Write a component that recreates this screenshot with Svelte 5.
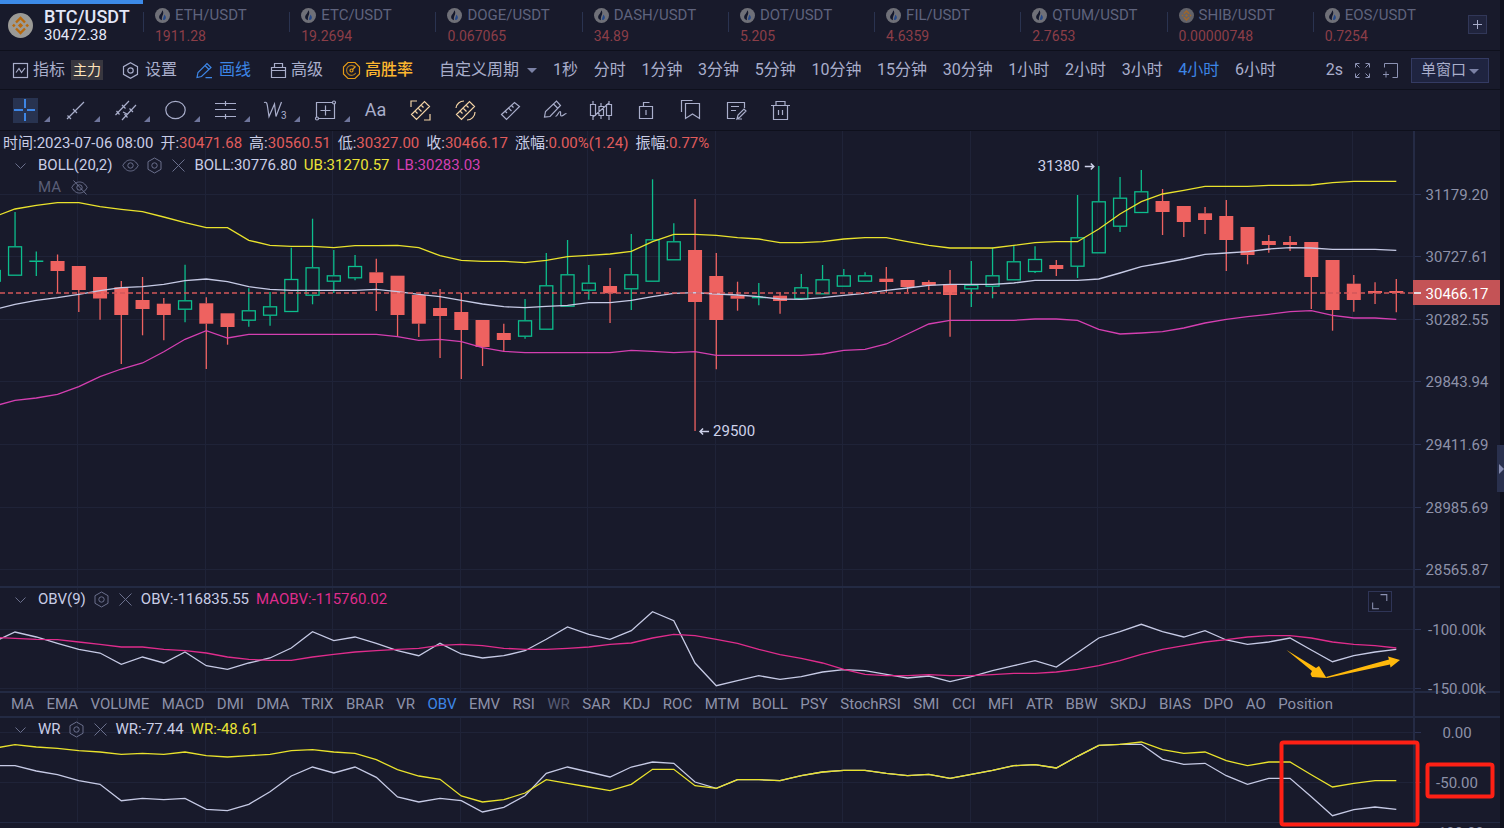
<script>
  const tickers = [
    { name: 'ETH/USDT', price: '1911.28', logo: 'flame' },
    { name: 'ETC/USDT', price: '19.2694', logo: 'flame' },
    { name: 'DOGE/USDT', price: '0.067065', logo: 'flame' },
    { name: 'DASH/USDT', price: '34.89', logo: 'flame' },
    { name: 'DOT/USDT', price: '5.205', logo: 'flame' },
    { name: 'FIL/USDT', price: '4.6359', logo: 'flame' },
    { name: 'QTUM/USDT', price: '2.7653', logo: 'flame' },
    { name: 'SHIB/USDT', price: '0.00000748', logo: 'bnb' },
    { name: 'EOS/USDT', price: '0.7254', logo: 'flame' },
  ];

  const periods = ['1秒', '分时', '1分钟', '3分钟', '5分钟', '10分钟', '15分钟', '30分钟', '1小时', '2小时', '3小时', '4小时', '6小时'];
  let period = '4小时';

  const indicators = ['MA', 'EMA', 'VOLUME', 'MACD', 'DMI', 'DMA', 'TRIX', 'BRAR', 'VR', 'OBV', 'EMV', 'RSI', 'WR', 'SAR', 'KDJ', 'ROC', 'MTM', 'BOLL', 'PSY', 'StochRSI', 'SMI', 'CCI', 'MFI', 'ATR', 'BBW', 'SKDJ', 'BIAS', 'DPO', 'AO', 'Position'];
  let indicator = 'OBV';

  const quote = [
    ['开', '30471.68'],
    ['高', '30560.51'],
    ['低', '30327.00'],
    ['收', '30466.17'],
    ['涨幅', '0.00%(1.24)'],
    ['振幅', '0.77%'],
  ];

  // all panes share one vertical chart space, it starts under the toolbars
  const TOP = 131;
  const AXIS = 86;
  const STEP = 21.25;
  const LAST = 65;
  let width = 1500;

  $: plot = width - AXIS;
  $: x = (i) => plot - 17.7 - (LAST - i) * STEP;
  $: line = (ys) => ys.map((y, k) => `${x(k - 1).toFixed(1)},${y}`).join(' ');

  // [up, body top, body bottom, high, low]
  const candles = [
    [1, 270, 281.7, 270, 281.7], [1, 246.3, 275.7, 212, 275.7], [1, 260.5, 262, 251.5, 276], [0, 261, 271, 254.5, 293],
    [0, 266, 290, 266, 312], [0, 277, 298.5, 277, 319.7], [0, 287.3, 315, 281, 364], [0, 300, 309, 277, 335.3],
    [0, 303.7, 315, 298, 340.3], [1, 300.3, 309.7, 264.7, 322.3], [0, 303.3, 323.7, 297.3, 369], [0, 313.3, 327, 313.3, 344.7],
    [1, 310.3, 320.7, 288.3, 326.7], [1, 306.3, 315.7, 292, 325.7], [1, 279, 312, 247.7, 312], [1, 267.3, 295.7, 218.7, 304.3],
    [1, 275.3, 281.7, 250, 293], [1, 266, 278.3, 255, 280.3], [0, 272.3, 283, 258.7, 311], [0, 275.7, 315, 275.7, 336.3],
    [0, 295, 323.7, 295, 337], [0, 308, 316, 289, 358], [0, 312, 330, 293, 379], [0, 320, 347, 320, 366],
    [0, 333, 340, 323.7, 351.3], [1, 320.3, 336.7, 299, 338.7], [1, 285.3, 329.7, 253, 329.7], [1, 274.3, 306.7, 240, 306.7],
    [1, 282.7, 290.7, 265, 299.7], [0, 286, 293.3, 268, 323], [1, 274.3, 289.3, 234, 310], [1, 239.3, 281.7, 179.3, 281.7],
    [1, 241.3, 260.3, 223.3, 260.3], [0, 250, 302, 199, 431], [0, 276, 320, 253, 369.3], [0, 295.7, 298.7, 281.7, 310.7],
    [1, 296.7, 298.3, 283, 305.3], [0, 295.7, 301, 292.3, 313.7], [1, 287.3, 299, 274, 299], [1, 279.3, 294.3, 265, 294.3],
    [1, 275.3, 286.7, 269, 286.7], [1, 275.3, 281.7, 272.3, 281.7], [0, 278.7, 282, 267, 292.7], [0, 280, 287, 280, 292],
    [0, 282, 285.3, 280.3, 290], [0, 284, 295, 270, 336.7], [1, 284.7, 289.3, 261, 307], [1, 275.3, 286.7, 247.7, 298.3],
    [1, 261.3, 280.3, 245.3, 280.3], [1, 259, 272, 246.3, 273], [0, 265, 269, 260, 276], [1, 237.3, 266.7, 195, 278],
    [1, 201.3, 253.3, 166, 253.3], [1, 197.7, 226.7, 177, 232], [1, 191.3, 213, 170, 213], [0, 201, 212, 189, 235],
    [0, 206, 222, 206, 237], [0, 213.3, 220, 207, 234], [0, 216, 240, 200, 271], [0, 227, 255, 227, 264.3],
    [0, 241, 245, 235, 252.7], [0, 242, 245, 236, 251], [0, 242, 277, 242, 309], [0, 260, 310, 260, 330.7],
    [0, 283.7, 300, 275, 311.7], [0, 291, 293, 282.3, 304], [0, 291, 293, 279, 312.3],
  ];

  const upper = [217, 209, 205.3, 202.7, 202.7, 206.7, 209.3, 211.7, 217, 222.7, 227.7, 227.7, 240.3, 245.3, 246.3, 246.3, 247.7, 245.7, 245.7, 245.3, 247.7, 255.7, 260.3, 261.3, 261.3, 262.7, 260.3, 256.7, 255.3, 254, 251.3, 241.7, 234.3, 234.3, 235.3, 237.7, 239, 242.7, 242.7, 241.7, 239, 237.7, 237.7, 241.7, 245.3, 248, 248, 248, 245.3, 242.7, 241.7, 241.7, 229, 214, 201.7, 194, 190.3, 186.3, 186.3, 186.3, 185.3, 185.3, 185, 182.7, 181.3, 181.3, 181.3];
  const middle = [309.7, 304.3, 300.3, 297.7, 294.3, 290.7, 287.7, 286.7, 284.3, 280.7, 279, 281.7, 286.7, 289.3, 290.3, 290.3, 290.3, 290.3, 289.3, 291.7, 294.3, 296.7, 300.3, 304, 306.7, 307.7, 306.3, 305.3, 302.7, 302.7, 300.3, 296.7, 293.3, 292.7, 294, 295, 296.7, 299, 299.3, 297.7, 295.3, 293.3, 290.3, 288, 285.3, 284.3, 284.3, 284.3, 283, 280.3, 280.3, 280.3, 279, 273, 266.7, 263, 259, 254.3, 253, 251.7, 249, 247.7, 248, 249.3, 249.3, 249.3, 250.3];
  const lower = [406.3, 400.3, 398, 394.3, 386.7, 376.7, 369, 363, 351.7, 339.3, 330.7, 338, 334.3, 334.3, 334.3, 334.3, 334.3, 334.3, 334.3, 336.7, 340.3, 339.3, 341.7, 347.7, 351.3, 352.7, 352.7, 352.7, 352.7, 352.7, 350.3, 351.3, 352.7, 351.7, 355.3, 355.3, 355.3, 355.3, 355.3, 354, 350.3, 349.3, 344, 334, 324, 320.3, 320.3, 320.3, 320.3, 319, 319, 320.3, 329.3, 334, 333, 331.7, 328, 323, 319.3, 316.7, 314.3, 311.7, 310.7, 315.3, 318, 318, 319.3];
  const obv = [642, 632, 637, 643.3, 649.3, 653, 664.3, 657, 663, 652, 665.7, 669.3, 663, 658, 648, 631.7, 640.7, 637, 643.3, 650.7, 655.7, 643.3, 654, 658, 655.7, 650.7, 639.3, 627, 634.3, 639.3, 630.7, 611.7, 620.7, 663, 685.7, 680.7, 675.7, 679.3, 676.7, 672, 669.7, 670.7, 674.3, 678, 676, 681.7, 676.7, 670.7, 665.7, 660.7, 667, 652.7, 638, 631.7, 624.3, 631.7, 637, 630.7, 640, 644.3, 642, 638, 650, 661.7, 655.7, 652, 649.3];
  const maobv = [637.3, 638.3, 639.3, 639.7, 642, 644.3, 647, 647, 649.3, 650.7, 653, 657, 659.3, 660.3, 660.3, 657, 654.3, 652, 650.7, 649.3, 648.3, 645.3, 644.3, 645.7, 648.3, 649.3, 649.3, 648.3, 647, 644.3, 643, 638, 634.3, 635.7, 639.3, 643.3, 649.3, 654.7, 658.3, 663, 669.3, 674.3, 675.7, 675.7, 674.7, 675.7, 675.7, 674.7, 673.3, 673.3, 672, 669.3, 665.7, 660.7, 654.3, 649.3, 645.7, 642, 639.7, 637, 635.7, 635.7, 638, 642, 644.3, 645.7, 648];
  const wrSlow = [748.3, 744.7, 747, 748.3, 750.7, 752, 754.3, 753.3, 754.3, 752, 755.7, 757, 755.7, 754.3, 750.7, 749.7, 752, 753.3, 759.7, 769.7, 776, 779.3, 796, 802, 799.7, 793, 779.7, 783.3, 787, 790.7, 784.3, 769.3, 769.3, 785.7, 788.3, 779.7, 779.7, 780.7, 775.7, 772, 770.3, 770.3, 773.3, 775.7, 774.3, 778.3, 774.3, 770.3, 765.7, 764.7, 768, 756.3, 745.3, 744.3, 742, 749.7, 753.3, 752, 760.7, 765.7, 762, 762, 774.7, 787, 783.3, 780.7, 780.7];
  const wrFast = [765.7, 765.7, 771, 774.7, 780.7, 784.3, 800.7, 798.3, 799.7, 798.3, 809.3, 810.7, 804.3, 791.7, 776, 767, 773, 767, 777.3, 797, 802, 798.3, 800.7, 812, 807.3, 795.7, 773.3, 767, 772, 777, 767, 762, 763.3, 782, 788.3, 779.7, 779.7, 780.7, 775.7, 772, 770.3, 770.3, 773.3, 775.7, 774.3, 778.3, 774.3, 770.3, 765.7, 764.7, 768, 756.3, 745.3, 744.3, 744.3, 759.3, 764.3, 763.3, 775.7, 784.3, 778.3, 778.3, 796.7, 815.7, 809.7, 807, 809.3];

  const columns = [3, 9, 15, 21, 27, 33, 39, 45, 51, 57, 63];
  const priceAxis = [
    ['31179.20', 194], ['30727.61', 256], ['30282.55', 319], ['29843.94', 381],
    ['29411.69', 444], ['28985.69', 507], ['28565.87', 569],
  ];
  const obvAxis = [['-100.00k', 629], ['-150.00k', 688]];
  const wrAxis = [['0.00', 732], ['-50.00', 782]];
</script>

{#snippet flame()}
  <svg class="coin" viewBox="0 0 15 15" aria-hidden="true">
    <circle cx="7.5" cy="7.5" r="7.5" fill="#6f7078" />
    <path d="M7.400 2.200c1 1.500 1.100 2.900.5 4.500-.6 1.500-1.300 2.700-1 5.500C4.800 11.500 3.800 10 4.200 8.200 4.600 6.400 7 5 7.400 2.200z" fill="#14182c" />
    <path d="M9.400 6.600c1.500 1.600 1.800 3 1.200 4.200-.5.900-1.300 1.300-2.400 1.300-.6-2.200.9-3.300 1.200-5.500z" fill="#24488a" />
  </svg>
{/snippet}

{#snippet bnb(bg, fg)}
  <svg class="coin" viewBox="0 0 25 25" aria-hidden="true">
    <circle cx="12.5" cy="12.5" r="12.5" fill={bg} />
    <g fill="none" stroke={fg} stroke-width="2.400">
      <path d="M8 9.500l4.500-4.500L17 9.500M8 15.500l4.500 4.500 4.500-4.500" />
    </g>
    <path d="M12.500 9.900l2.600 2.600-2.600 2.600-2.600-2.600zM5.800 10.700l1.800 1.800-1.800 1.800L4 12.500zM19.200 10.700l1.800 1.800-1.800 1.800-1.800-1.800z" fill={fg} />
  </svg>
{/snippet}

{#snippet chevron()}
  <button class="mini chevron" aria-label="收起">
    <svg viewBox="0 0 17 17"><path d="M3.500 6.500l5 5 5-5" /></svg>
  </button>
{/snippet}

{#snippet hexagon()}
  <button class="mini" aria-label="参数">
    <svg viewBox="0 0 17 17"><path d="M8.500 1l6.500 3.700v7.600L8.500 16 2 12.300V4.700z" /><circle cx="8.500" cy="8.500" r="2.700" /></svg>
  </button>
{/snippet}

{#snippet cross()}
  <button class="mini" aria-label="关闭">
    <svg viewBox="0 0 17 17"><path d="M2.500 2.500l12 12M14.500 2.500l-12 12" /></svg>
  </button>
{/snippet}

{#snippet grid(rows, top, bottom)}
  {#each columns as c}
    <line class="grid" x1={Math.round(x(c) - 1.5) + 0.5} x2={Math.round(x(c) - 1.5) + 0.5} y1={top} y2={bottom} />
  {/each}
  {#each rows as [label, y]}
    <line class="grid" x1="0" x2={plot} y1={y + 0.5} y2={y + 0.5} />
    <line class="tick" x1={plot} x2={plot + 7} y1={y + 0.5} y2={y + 0.5} />
    <text class="label" x={plot + 43} y={y + 6}>{label}</text>
  {/each}
  <line class="axis" x1={plot} x2={plot} y1={top} y2={bottom} />
{/snippet}

<div class="app">
  <header class="tickers">
    <a class="active" href="#btc">
      {@render bnb('#9b9a96', '#b8690c')}
      <span class="active-text">
        <strong>BTC/USDT</strong>
        <span>30472.38</span>
      </span>
    </a>
    {#each tickers as t}
      <a class="ticker" href="#{t.name}">
        <span class="name">
          {#if t.logo === 'bnb'}{@render bnb('#63636a', '#a0672a')}{:else}{@render flame()}{/if}
          {t.name}
        </span>
        <span class="price">{t.price}</span>
      </a>
    {/each}
    <div class="add">
      <button aria-label="添加">
        <svg viewBox="0 0 17 17"><path d="M8.500 4v9M4 8.500h9" /></svg>
      </button>
    </div>
  </header>

  <nav class="menu">
    <button class="item">
      <svg viewBox="0 0 17 17"><rect x="1.500" y="1.500" width="14" height="14" /><path d="M4 10.500l3-4 2.500 4 3.500-4.500" /></svg>
      指标<span class="badge">主力</span>
    </button>
    <button class="item wide">
      <svg viewBox="0 0 17 17"><path d="M8.500.8l7 3.900v7.600l-7 3.900-7-3.900V4.700z" /><circle cx="8.500" cy="8.500" r="2.700" /></svg>
      设置
    </button>
    <button class="item wide draw">
      <svg viewBox="0 0 17 17"><path d="M1 15.500l1-5L11 1.500l4 4-9.500 9zM9 3.500l4 4M9.500 15.700H16" /></svg>
      画线
    </button>
    <button class="item">
      <svg viewBox="0 0 17 17"><path d="M1.500 5.500h14v10h-14zM4.500 5.500v-4h8v4M1.500 8.500h14" /></svg>
      高级
    </button>
    <button class="item rate">
      <svg viewBox="0 0 19 19"><path d="M6 1.500h7L17.500 6v7L13 17.500H6L1.500 13V6z" /><path d="M13.300 6a5 5 0 1 0 .5 6" opacity=".7" /><circle cx="9.500" cy="9.500" r="1.500" /><path d="M10.500 8.500l3-3" /></svg>
      高胜率
    </button>
    <button class="custom">自定义周期<i class="caret"></i></button>
    <ul class="periods">
      {#each periods as p}
        <li><button class:on={p === period} on:click={() => (period = p)}>{p}</button></li>
      {/each}
    </ul>
    <div class="right">
      <span>2s</span>
      <button aria-label="全屏">
        <svg viewBox="0 0 17 17"><path d="M1.500 5.500v-4h4M11.500 1.500h4v4M15.500 11.500v4h-4M5.500 15.500h-4v-4M2 2l3.500 3.500M15 2l-3.500 3.500M15 15l-3.500-3.500M2 15l3.500-3.500" /></svg>
      </button>
      <button aria-label="新窗口">
        <svg viewBox="0 0 17 17"><path d="M2.500 5.500v-4h13v14h-5M1 12.500h6M4 9.500v6" /></svg>
      </button>
      <span class="select">
        <select aria-label="窗口布局"><option>单窗口</option><option>双窗口</option></select>
        <i class="caret"></i>
      </span>
    </div>
  </nav>

  <div class="tools">
    <button class="tool more on" aria-label="十字光标">
      <svg viewBox="0 0 25 25"><path d="M12 1v9M12 15v8M1 12h9M14 12h8" /></svg>
    </button>
    <button class="tool more" aria-label="趋势线">
      <svg viewBox="0 0 25 25"><path d="M4 21L21 4M4.500 17.500l3.500 3.500M10 11l4 4" /></svg>
    </button>
    <button class="tool more" aria-label="平行线">
      <svg viewBox="0 0 25 25"><path d="M2.500 17L16 3M9 22L23 7M3.500 13l3 3.500M9 7l3.500 3.500M11.500 16l3 3.500M16.500 10.500l3.500 3.500M10 14l4 2" /></svg>
    </button>
    <button class="tool more" aria-label="椭圆">
      <svg viewBox="0 0 25 25"><ellipse cx="12.500" cy="12" rx="9.700" ry="8.700" /></svg>
    </button>
    <button class="tool more" aria-label="水平线">
      <svg viewBox="0 0 25 25"><path d="M2 5.500h21M2 11.500h21M2 18.500h21M12.500 3v5M12.500 16v5" /></svg>
    </button>
    <button class="tool more" aria-label="波浪">
      <svg viewBox="0 0 25 25"><path d="M1 4.500c3-1 3 1 3.500 4l1.500 10L11.500 6l1.500 12.500L18.500 4" /><text x="18" y="21" class="sub">3</text></svg>
    </button>
    <button class="tool more" aria-label="区间">
      <svg viewBox="0 0 25 25"><path d="M19.500 4.500h-16v15M5.500 20.500h16v-15M12.500 7.500v10M7.500 12.500h10" /><circle cx="21" cy="4.500" r="1.500" /><circle cx="4" cy="20.500" r="1.500" /></svg>
    </button>
    <button class="tool text">Aa</button>
    <button class="tool gold" aria-label="测量">
      <svg viewBox="0 0 25 25"><path d="M3.500 16.500L16.500 3.500l5 5-13 13zM7 13l2.500 2.500M10 10l3.500 3.500M13 7l2.500 2.500M3 9V3h6M22 16v6h-6" /></svg>
    </button>
    <button class="tool gold" aria-label="区域测量">
      <svg viewBox="0 0 25 25"><path d="M3.500 16.500L16.500 3.500l5 5-13 13zM7 13l2.500 2.500M10 10l3.500 3.500M13 7l2.500 2.500M3 10a8 8 0 0 1 8-7M22 14a8 8 0 0 1-8 8" /></svg>
    </button>
    <button class="tool" aria-label="标尺">
      <svg viewBox="0 0 25 25"><path d="M3.500 16.500L16.500 4.500l5 4-13 13zM7 13l2 2M10.500 10l3 3M13.500 7.500l2 2" /></svg>
    </button>
    <button class="tool" aria-label="画笔">
      <svg viewBox="0 0 25 25"><path d="M1.500 19l1-5.500L13.500 3l4 4.500L7 18.500zM10.500 6l4 4M12.500 18.500c2 0 3-5 4.500-5s-.5 4.500 1.500 4.500 3-2.500 5-2.500" /></svg>
    </button>
    <button class="tool" aria-label="K线">
      <svg viewBox="0 0 25 25"><path d="M2.500 6.500h5v11h-5zM11 8.500h4.500v9H11zM18.500 6.500h5v11h-5zM5 3v3.500M5 17.500V22M13 5v3.500M13 17.500V21M21 3v3.500M21 17.500V22M5 19L21 5" /></svg>
    </button>
    <button class="tool" aria-label="锁定">
      <svg viewBox="0 0 25 25"><path d="M6.500 8.500h13v12h-13zM10.500 8.500v-4h6M13 12v5" /></svg>
    </button>
    <button class="tool" aria-label="书签">
      <svg viewBox="0 0 25 25"><path d="M7.500 5.500h14v15l-7-4.500-7 4.500zM3.500 14V2.500h11" /></svg>
    </button>
    <button class="tool" aria-label="笔记">
      <svg viewBox="0 0 25 25"><path d="M12 20.500H4.500v-16h17V10M8 8.500h8M8 12.500h5M14 21l1-4 6-6 2 2-6 6zM14 21h5" /></svg>
    </button>
    <button class="tool" aria-label="删除">
      <svg viewBox="0 0 25 25"><path d="M3 7.500h19M8 7.500v-4h9v4M5.500 7.500v14h14v-14M10.500 12v5M14.500 12v5" /></svg>
    </button>
  </div>

  <main bind:clientWidth={width}>
    <section class="pane">
      <svg class="plot" height="455" viewBox="0 {TOP} {width} 455">
        {@render grid(priceAxis, TOP, 586)}
        {#each candles as [up, top, bottom, high, low], k}
          {@const cx = x(k - 1)}
          <g class={up ? 'up' : 'down'}>
            <line x1={cx} x2={cx} y1={high} y2={top} />
            <line x1={cx} x2={cx} y1={bottom} y2={low} />
            {#if up && bottom - top > 2}
              <rect x={cx - 6.5} y={top + 0.5} width="13" height={bottom - top - 1} />
            {:else}
              <rect class="solid" x={cx - 7} y={top} width="14" height={bottom - top} />
            {/if}
          </g>
        {/each}
        <polyline class="yellow" points={line(upper)} />
        <polyline class="white" points={line(middle)} />
        <polyline class="pink" points={line(lower)} />
        <line class="last" x1="0" x2={plot} y1="293" y2="293" />
        <rect class="flag" x={plot - 1} y="280" width={AXIS + 1} height="25" />
        <line class="flag-tick" x1={plot} x2={plot + 7} y1="293" y2="293" />
        <text class="label now" x={plot + 43} y="299">30466.17</text>
        <text class="mark" text-anchor="end" x={x(51) - 19} y="171">31380</text>
        <path class="arrow" d="M{x(51) - 14} 166.500h9m-3-3l3 3-3 3" />
        <text class="mark" x={x(32) + 18} y="436">29500</text>
        <path class="arrow" d="M{x(32) + 14} 431.500h-9m3-3l-3 3 3 3" />
      </svg>
      <div class="legend">
        <p class="quote">
          <span>时间:2023-07-06 08:00</span>
          {#each quote as [k, v]}
            <span>{k}:<em>{v}</em></span>
          {/each}
        </p>
        <div class="row">
          {@render chevron()}
          <span class="title">BOLL(20,2)</span>
          <button class="mini" aria-label="显示">
            <svg viewBox="0 0 17 17"><path d="M.8 8.500C3 4.500 5.500 3 8.500 3s5.500 1.500 7.700 5.500C14 12.500 11.500 14 8.500 14S3 12.500.8 8.500z" /><circle cx="8.500" cy="8.500" r="2.700" /></svg>
          </button>
          {@render hexagon()}
          {@render cross()}
          <span class="value">BOLL:30776.80</span>
          <span class="value y">UB:31270.57</span>
          <span class="value p">LB:30283.03</span>
        </div>
        <div class="row hidden">
          <span class="title">MA</span>
          <button class="mini" aria-label="隐藏">
            <svg viewBox="0 0 17 17"><path d="M.8 8.500C3 4.500 5.500 3 8.500 3s5.500 1.500 7.700 5.500C14 12.500 11.500 14 8.500 14S3 12.500.8 8.500z" /><circle cx="8.500" cy="8.500" r="2.700" /><path d="M2.500 1.500l13 14" /></svg>
          </button>
        </div>
      </div>
    </section>

    <section class="pane">
      <svg class="plot" height="103" viewBox="0 588 {width} 103">
        {@render grid(obvAxis, 588, 691)}
        <polyline class="white" points={line(obv)} />
        <polyline class="magenta" points={line(maobv)} />
      </svg>
      <div class="legend sub-legend">
        <div class="row">
          {@render chevron()}
          <span class="title">OBV(9)</span>
          {@render hexagon()}
          {@render cross()}
          <span class="value">OBV:-116835.55</span>
          <span class="value m">MAOBV:-115760.02</span>
        </div>
      </div>
      <button class="enlarge" aria-label="放大">
        <svg viewBox="0 0 21 19"><path d="M11 2.500h6v6M3.500 10v6h6" /></svg>
      </button>
    </section>

    <ul class="indicators">
      {#each indicators as name}
        <li><button class:on={name === indicator} class:used={name === 'WR'} on:click={() => (indicator = name)}>{name}</button></li>
      {/each}
    </ul>

    <section class="pane">
      <svg class="plot" height="104" viewBox="0 718 {width} 104">
        {@render grid(wrAxis, 718, 822)}
        <polyline class="white" points={line(wrFast)} />
        <polyline class="yellow" points={line(wrSlow)} />
      </svg>
      <div class="legend sub-legend">
        <div class="row">
          {@render chevron()}
          <span class="title">WR</span>
          {@render hexagon()}
          {@render cross()}
          <span class="value">WR:-77.44</span>
          <span class="value y">WR:-48.61</span>
        </div>
      </div>
    </section>

    <div class="foot"><span>-100.00</span></div>

    <svg class="notes" height="697" viewBox="0 {TOP} {width} 697">
      <g transform="translate({plot - 1414} 0)">
        <rect x="1281.500" y="742.500" width="136" height="82" rx="2" />
        <rect x="1427.500" y="764.500" width="65" height="32" rx="2" />
        <path d="M1286.500 650L1312 671l-1.500 3 1.500 3 14.500 1-7.500-12-3 2zM1326 677l63-17.500-1-3 12 3.500-9.500 7.500-.500-3L1327 678z" />
      </g>
    </svg>
  </main>

  <button class="handle" aria-label="展开"></button>
</div>

<style>
  :global(body) {
    margin: 0;
    overflow: hidden;
    background: #0e101c;
  }
  .app {
    position: relative;
    display: flex;
    flex-direction: column;
    height: 100vh;
    padding-right: 4px;
    overflow: hidden;
    box-sizing: border-box;
    background: #0e101c;
    color: #a9aecb;
    font: 15px/20px Roboto, "Noto Sans CJK SC", sans-serif;
  }
  button {
    padding: 0;
    border: 0;
    background: none;
    color: inherit;
    font: inherit;
    cursor: pointer;
    white-space: nowrap;
  }
  a {
    color: inherit;
    text-decoration: none;
  }
  ul {
    display: flex;
    margin: 0;
    padding: 0;
    list-style: none;
  }
  svg {
    display: block;
    flex: none;
    fill: none;
    stroke: currentColor;
  }
  .coin {
    stroke: none;
  }

  .tickers,
  .menu,
  .tools {
    display: flex;
    flex: none;
    border-bottom: 1px solid #0e101c;
    background: #181a2b;
  }
  .tickers {
    height: 50px;
  }
  .active {
    display: flex;
    gap: 11px;
    width: 143px;
    padding-left: 8px;
    box-sizing: border-box;
    border-top: 4px solid #3c8ae8;
    color: #e4e7f8;
  }
  .active .coin {
    width: 25px;
    height: 25px;
    margin-top: 9px;
  }
  .active-text {
    display: flex;
    flex-direction: column;
    padding-top: 3px;
    line-height: 17px;
  }
  .active-text strong {
    font-size: 18px;
    line-height: 20px;
    font-weight: 500;
  }
  .ticker {
    position: relative;
    display: flex;
    flex: 1;
    flex-direction: column;
    padding: 5px 0 0 12px;
    color: #5f637d;
  }
  .ticker::before {
    position: absolute;
    top: 12px;
    left: 0;
    width: 1px;
    height: 20px;
    background: #2a3350;
    content: '';
  }
  .name {
    display: flex;
    align-items: center;
    gap: 5px;
  }
  .name .coin {
    width: 15px;
    height: 15px;
  }
  .price {
    font-size: 14px;
    line-height: 22px;
    color: #8c3e48;
  }
  .add {
    width: 41px;
  }
  .add button {
    width: 19px;
    height: 19px;
    margin: 15px 0 0 9px;
    border: 1px solid #313758;
    background: #20243d;
    color: #a9aecb;
  }

  .menu {
    align-items: center;
    height: 38px;
    padding-left: 12px;
    font-size: 16px;
  }
  .item {
    display: flex;
    align-items: center;
    gap: 4px;
    margin-right: 19px;
  }
  .item svg {
    width: 17px;
    height: 17px;
    stroke-width: 1.2;
  }
  .item.wide {
    gap: 6px;
  }
  .item.draw {
    color: #3d86e6;
  }
  .item.rate {
    margin-right: 26px;
    color: #fdb62f;
    font-weight: 500;
  }
  .item.rate svg {
    width: 19px;
    height: 19px;
    stroke: #e39a17;
  }
  .badge {
    padding: 0 2px;
    margin-left: 2px;
    background: #38373f;
    color: #ffe4bb;
    font-size: 14px;
    line-height: 20px;
  }
  .caret {
    border: 5px solid transparent;
    border-top-color: #7b81a5;
    border-bottom: 0;
  }
  .custom {
    display: flex;
    align-items: center;
    gap: 8px;
    margin-right: 16px;
  }
  .periods {
    flex: 0 1 723px;
    justify-content: space-between;
  }
  .on {
    color: #3d86e6;
  }
  .right {
    display: flex;
    align-items: center;
    gap: 11px;
    margin-left: auto;
    padding-right: 11px;
  }
  .right svg {
    width: 17px;
    height: 17px;
    color: #8c92b3;
  }
  .select {
    position: relative;
    margin-left: 1px;
  }
  .select select {
    display: block;
    width: 78px;
    height: 25px;
    padding: 0 0 0 9px;
    border: 1px solid #343b63;
    border-radius: 0;
    appearance: none;
    background: #1f2440;
    color: #a9aecb;
    font: 15px Roboto, "Noto Sans CJK SC", sans-serif;
  }
  .select .caret {
    position: absolute;
    top: 11px;
    right: 10px;
    pointer-events: none;
  }

  .tools {
    align-items: center;
    height: 40px;
  }
  .tool {
    display: flex;
    align-items: center;
    justify-content: center;
    width: 45px;
    height: 40px;
  }
  .tool svg {
    width: 25px;
    height: 25px;
    stroke-width: 1.2;
  }
  .tool.more {
    position: relative;
    width: 50px;
  }
  .tool.more::after {
    position: absolute;
    right: 0;
    bottom: 8px;
    border: 3px solid #6e759b;
    border-top-color: transparent;
    border-left-color: transparent;
    content: '';
  }
  .tool.on svg {
    background: #283350;
    stroke-width: 2;
  }
  .tool.text {
    margin-left: 3px;
    font-size: 18px;
  }
  .tool.gold {
    color: #f3d3a5;
  }
  .sub {
    fill: currentColor;
    stroke: none;
    font-size: 10px;
  }

  main {
    position: relative;
    flex: 1;
    background: #181a2b;
  }
  .pane {
    position: relative;
    border-bottom: 2px solid #232a43;
  }
  .plot {
    width: 100%;
    overflow: visible;
    stroke: none;
  }
  .grid {
    stroke: #1f2338;
  }
  .tick {
    stroke: #2b3352;
  }
  .axis {
    stroke: #252b45;
    stroke-width: 2;
  }
  .label {
    fill: #8d91a8;
    text-anchor: middle;
  }
  .up,
  .down {
    stroke-width: 1.3;
  }
  .up {
    fill: none;
    stroke: #0cbd8c;
  }
  .down {
    stroke: #ee6260;
    fill: #ee6260;
  }
  .solid {
    stroke: none;
  }
  .up .solid {
    fill: #0cbd8c;
  }
  polyline {
    fill: none;
    stroke-width: 1.3;
  }
  .yellow {
    stroke: #e9e22c;
  }
  .white {
    stroke: #c6cae5;
  }
  .pink {
    stroke: #d43fb1;
  }
  .magenta {
    stroke: #df2c8c;
  }
  .last {
    stroke: #d2575a;
    stroke-width: 1.5;
    stroke-dasharray: 5 3;
  }
  .flag {
    fill: #c45356;
  }
  .flag-tick {
    stroke: #e8dbe2;
    stroke-width: 2;
  }
  .label.now {
    fill: #fff;
  }
  .mark {
    fill: #ced2ea;
  }
  .arrow {
    stroke: #ced2ea;
    stroke-width: 1.5;
  }

  .legend {
    position: absolute;
    top: 2px;
    left: 3px;
    color: #c9cde6;
  }
  .sub-legend {
    top: 0;
  }
  .quote {
    display: flex;
    gap: 7px;
    margin: 0;
    white-space: nowrap;
  }
  .quote em {
    color: #e05c5c;
    font-style: normal;
  }
  .row {
    display: flex;
    align-items: center;
    gap: 7px;
    height: 22px;
    padding-left: 9px;
    white-space: nowrap;
  }
  .quote + .row {
    height: 24px;
  }
  .title {
    margin-right: 3px;
  }
  .sub-legend .title {
    margin-right: 0;
  }
  .row.hidden {
    height: 20px;
    padding-left: 35px;
    color: #5a5e77;
  }
  .mini {
    color: #6a6f8c;
  }
  .mini svg {
    width: 17px;
    height: 17px;
  }
  .chevron {
    margin-right: 2px;
  }
  .value.y {
    color: #ebe336;
  }
  .value.p {
    color: #d43fb1;
  }
  .value.m {
    color: #df2c8c;
  }
  .enlarge {
    position: absolute;
    top: 3px;
    right: 108px;
    width: 24px;
    height: 21px;
    border: 1px solid #2f3557;
    color: #8c92b3;
  }

  .indicators {
    justify-content: space-between;
    height: 23px;
    margin-right: 85px;
    padding: 0 80px 0 11px;
    border-right: 2px solid #252b45;
    color: #8d91a8;
    line-height: 23px;
  }
  .indicators .used {
    color: #565a72;
  }
  .indicators + .pane {
    border-top: 2px solid #232a43;
    border-bottom-width: 1px;
  }
  .foot {
    display: flex;
    justify-content: flex-end;
    padding-right: 16px;
    color: #8d91a8;
  }
  .notes {
    position: absolute;
    top: 0;
    left: 0;
    width: 100%;
    pointer-events: none;
    stroke: none;
  }
  .notes rect {
    stroke: #ff2015;
    stroke-width: 4;
  }
  .notes path {
    fill: #ffb90c;
  }

  .handle {
    position: absolute;
    top: 445px;
    right: 0;
    width: 7px;
    height: 47px;
    background: #29304d;
  }
  .handle::after {
    display: block;
    width: 0;
    margin-left: 2px;
    border: 5px solid transparent;
    border-left-color: #858bb0;
    border-right: 0;
    content: '';
  }
</style>
